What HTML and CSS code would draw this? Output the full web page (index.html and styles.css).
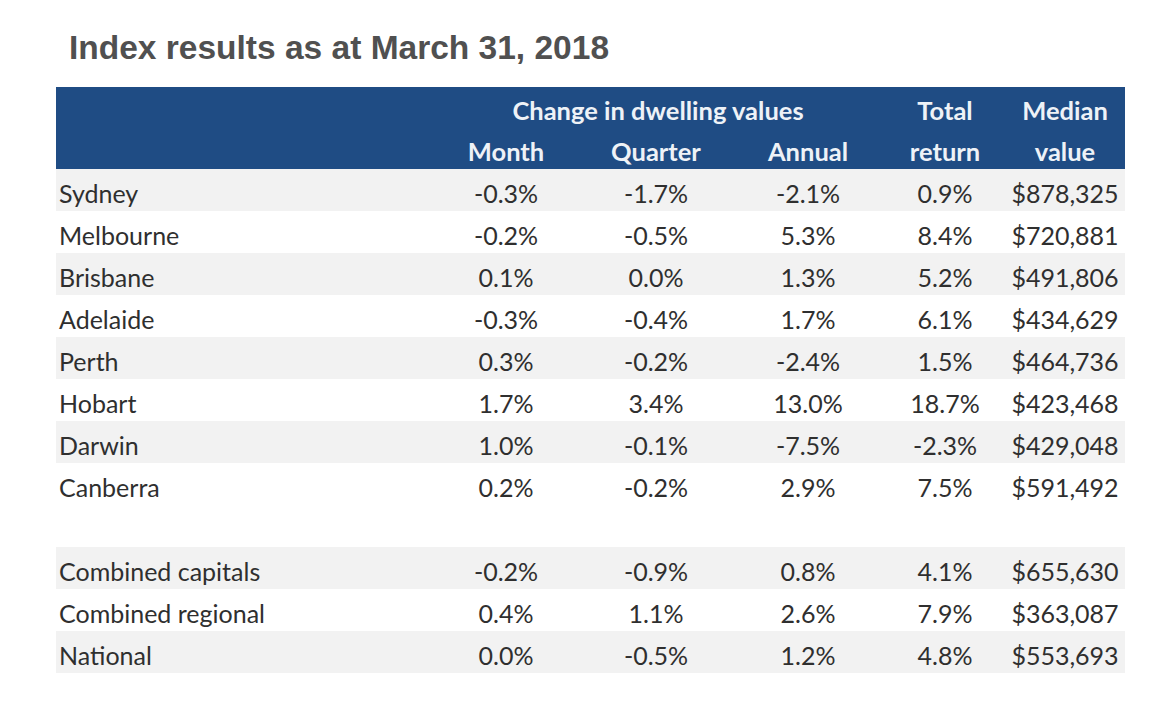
FILE: index.html
```html
<!DOCTYPE html>
<html lang="en">
<head>
<meta charset="utf-8">
<title>Index results as at March 31, 2018</title>
<link rel="stylesheet" href="styles.css">
</head>
<body>
<div class="page">
  <h1 class="title">Index results as at March 31, 2018</h1>
  <table class="index-table">
    <colgroup>
      <col class="c-label"><col class="c-month"><col class="c-quarter"><col class="c-annual"><col class="c-total"><col class="c-median">
    </colgroup>
    <thead>
      <tr>
        <th></th>
        <th colspan="3">Change in dwelling values</th>
        <th>Total</th>
        <th>Median</th>
      </tr>
      <tr>
        <th></th>
        <th>Month</th>
        <th>Quarter</th>
        <th>Annual</th>
        <th>return</th>
        <th>value</th>
      </tr>
    </thead>
    <tbody>
      <tr class="shade"><td>Sydney</td><td>-0.3%</td><td>-1.7%</td><td>-2.1%</td><td>0.9%</td><td>$878,325</td></tr>
      <tr><td>Melbourne</td><td>-0.2%</td><td>-0.5%</td><td>5.3%</td><td>8.4%</td><td>$720,881</td></tr>
      <tr class="shade"><td>Brisbane</td><td>0.1%</td><td>0.0%</td><td>1.3%</td><td>5.2%</td><td>$491,806</td></tr>
      <tr><td>Adelaide</td><td>-0.3%</td><td>-0.4%</td><td>1.7%</td><td>6.1%</td><td>$434,629</td></tr>
      <tr class="shade"><td>Perth</td><td>0.3%</td><td>-0.2%</td><td>-2.4%</td><td>1.5%</td><td>$464,736</td></tr>
      <tr><td>Hobart</td><td>1.7%</td><td>3.4%</td><td>13.0%</td><td>18.7%</td><td>$423,468</td></tr>
      <tr class="shade"><td>Darwin</td><td>1.0%</td><td>-0.1%</td><td>-7.5%</td><td>-2.3%</td><td>$429,048</td></tr>
      <tr><td>Canberra</td><td>0.2%</td><td>-0.2%</td><td>2.9%</td><td>7.5%</td><td>$591,492</td></tr>
      <tr class="spacer"><td></td><td></td><td></td><td></td><td></td><td></td></tr>
      <tr class="shade"><td>Combined capitals</td><td>-0.2%</td><td>-0.9%</td><td>0.8%</td><td>4.1%</td><td>$655,630</td></tr>
      <tr><td>Combined regional</td><td>0.4%</td><td>1.1%</td><td>2.6%</td><td>7.9%</td><td>$363,087</td></tr>
      <tr class="shade"><td>National</td><td>0.0%</td><td>-0.5%</td><td>1.2%</td><td>4.8%</td><td>$553,693</td></tr>
    </tbody>
  </table>
</div>
</body>
</html>
```

FILE: styles.css
```css
html, body {
  margin: 0;
  padding: 0;
  background: #ffffff;
}

.page {
  padding: 29px 0 0 56px;
  width: 1069px;
}

.title {
  margin: 0 0 21px 13px;
  font-family: "Liberation Sans", Arial, sans-serif;
  font-weight: bold;
  font-size: 33.5px;
  line-height: 37px;
  color: #505050;
}

.index-table {
  border-collapse: collapse;
  table-layout: fixed;
  width: 1069px;
  font-family: Lato, "Open Sans", sans-serif;
  font-size: 25px;
  color: #2f2f2f;
}

.c-label { width: 375px; }
.c-month { width: 150px; }
.c-quarter { width: 150px; }
.c-annual { width: 154px; }
.c-total { width: 120px; }
.c-median { width: 120px; }

.index-table thead th {
  background: #1f4c84;
  color: #eef2f7;
  font-weight: bold;
  font-size: 25.5px;
  text-align: center;
  height: 41px;
  padding: 6px 0 0;
  line-height: 35px;
  box-sizing: border-box;
  white-space: nowrap;
}

.index-table tbody td {
  height: 42px;
  padding: 7px 0 0;
  line-height: 35px;
  box-sizing: border-box;
  text-align: center;
  white-space: nowrap;
}

.index-table tbody td:first-child {
  text-align: left;
  padding-left: 3px;
}

.index-table tbody tr.shade td {
  background: #f2f2f2;
}
```
